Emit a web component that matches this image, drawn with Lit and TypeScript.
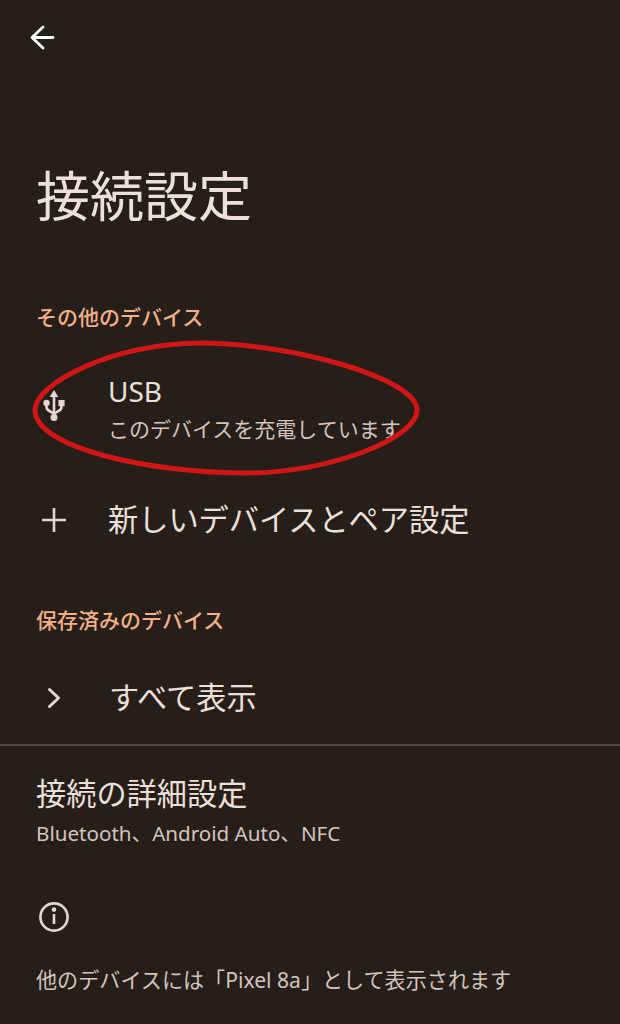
import { LitElement, html, css } from 'lit';
import { customElement } from 'lit/decorators.js';

@customElement('app-root')
export class AppRoot extends LitElement {
  static styles = css`
    :host {
      display: block;
      position: relative;
      width: 620px;
      height: 1024px;
      overflow: hidden;
      background: #261e19;
      color: #ece0d9;
      font-family: 'Noto Sans', 'Noto Sans CJK JP', sans-serif;
      font-weight: 400;
    }
    .top {
      height: 76px;
      padding-left: 26px;
      display: flex;
      align-items: center;
    }
    .title {
      margin: 0;
      padding: 87px 36px 0;
      font-size: 54px;
      line-height: 66px;
      font-weight: 400;
    }
    .section {
      padding: 0 36px;
      font-size: 21px;
      line-height: 28px;
      font-weight: 500;
      color: #f3b088;
    }
    .section.first {
      margin-top: 74px;
    }
    .row {
      display: flex;
      align-items: center;
    }
    .icon {
      width: 36px;
      margin-left: 36px;
      margin-right: 36px;
      display: flex;
      justify-content: center;
      flex: none;
    }
    .usb {
      height: 112px;
      margin-top: 21px;
    }
    .usb .icon {
      margin-bottom: 6px;
    }
    .usb .name {
      font-size: 28px;
      line-height: 42px;
    }
    .sub {
      font-size: 21px;
      line-height: 34px;
      color: #d3c5bd;
    }
    .big {
      font-size: 30.2px;
      line-height: 40px;
    }
    .pair {
      height: 100px;
      margin-top: 6px;
    }
    .section.second {
      margin-top: 36px;
    }
    .all {
      height: 92px;
      margin-top: 18px;
    }
    .all .icon {
      margin-right: 37px;
    }
    .divider {
      height: 2px;
      background: #4f4541;
    }
    .advanced {
      padding: 28px 36px 0;
    }
    .advanced .sub {
      margin-top: 2px;
      font-size: 20.6px;
    }
    .info {
      padding: 52px 0 0 39px;
      display: flex;
    }
    .note {
      padding: 33px 36px 0;
      font-size: 21.1px;
      line-height: 30px;
      color: #d3c5bd;
    }
    .circle {
      position: absolute;
      left: 30px;
      top: 338px;
    }
  `;

  render() {
    return html`
      <div class="top">
        <svg width="32" height="32" viewBox="0 0 32 32" fill="none" stroke="#fff" stroke-width="2.8" stroke-linecap="round" stroke-linejoin="round">
          <path d="M27 15.5H6M17 5L6 15.5 17 26" />
        </svg>
      </div>
      <h1 class="title">接続設定</h1>

      <div class="section first">その他のデバイス</div>
      <div class="row usb">
        <div class="icon">
          <svg width="22" height="31" viewBox="0 0 22 31" fill="#e3d7d0" stroke="#e3d7d0" stroke-width="2.6">
            <path d="M11 5v22" fill="none" />
            <path d="M11 0l4.4 7H6.6z" stroke="none" />
            <circle cx="11" cy="27.5" r="3.5" stroke="none" />
            <path d="M3.5 13v4c0 2 1 3 3 4l4.5 3M18.5 13v4c0 2-1 3-3 4l-4.5 3" fill="none" />
            <circle cx="3.5" cy="13" r="3.2" stroke="none" />
            <rect x="15.4" y="10" width="6.2" height="6.2" stroke="none" />
          </svg>
        </div>
        <div>
          <div class="name">USB</div>
          <div class="sub">このデバイスを充電しています</div>
        </div>
      </div>
      <div class="row pair">
        <div class="icon">
          <svg width="26" height="26" viewBox="0 0 26 26" stroke="#e3d7d0" stroke-width="2.6" fill="none">
            <path d="M13 1v24M1 13h24" />
          </svg>
        </div>
        <div class="big">新しいデバイスとペア設定</div>
      </div>

      <div class="section second">保存済みのデバイス</div>
      <div class="row all">
        <div class="icon">
          <svg width="16" height="24" viewBox="0 0 16 24" stroke="#e3d7d0" stroke-width="3" fill="none" stroke-linecap="round" stroke-linejoin="round">
            <path d="M3.5 3.5L12.5 12l-9 8.5" />
          </svg>
        </div>
        <div class="big">すべて表示</div>
      </div>
      <div class="divider"></div>

      <div class="advanced">
        <div class="big">接続の詳細設定</div>
        <div class="sub">Bluetooth、Android Auto、NFC</div>
      </div>
      <div class="info">
        <svg width="30" height="30" viewBox="0 0 30 30" fill="none" stroke="#e3d7d0" stroke-width="2.6">
          <circle cx="15" cy="15" r="13.6" />
          <path d="M15 12v10" />
          <circle cx="15" cy="7.6" r="1" fill="#e3d7d0" />
        </svg>
      </div>
      <div class="note">他のデバイスには「Pixel 8a」として表示されます</div>

      <svg class="circle" width="392" height="140" viewBox="0 0 392 140" fill="none" stroke="#cf1515" stroke-width="5">
        <path d="M5 72C5 45 85 5 170 5c90 0 217 35 217 67 0 28-87 63-170 63C120 135 5 110 5 72z" />
      </svg>
    `;
  }
}
